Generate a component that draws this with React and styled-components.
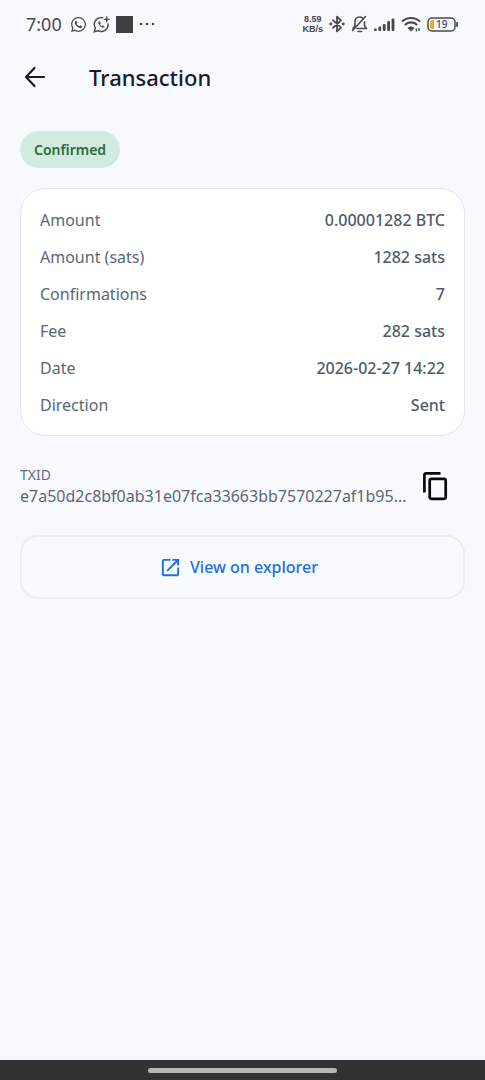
import React from 'react'
import styled, { createGlobalStyle } from 'styled-components'
import { MdOpenInNew } from 'react-icons/md'
import { FaWhatsapp } from 'react-icons/fa'


const GlobalStyle = createGlobalStyle`
  * {
    box-sizing: border-box;
  }
  body {
    margin: 0;
    background: #f8f9ff;
    font-family: 'Noto Sans', sans-serif;
    color: #4f5b6b;
  }
  button {
    font-family: inherit;
    cursor: pointer;
  }
`

const Screen = styled.div`
  min-height: 100vh;
  display: flex;
  flex-direction: column;
`

const StatusBar = styled.div`
  height: 48px;
  padding: 0 26px;
  display: flex;
  align-items: center;
  justify-content: space-between;
  color: #48494c;
`

const StatusGroup = styled.div`
  display: flex;
  align-items: center;
  gap: ${({ $gap }) => $gap}px;

  svg {
    display: block;
    flex: none;
  }
`

const Clock = styled.span`
  font-size: 18px;
  font-weight: 400;
  line-height: 24px;
  margin-right: 2px;
`

const Square = styled.span`
  width: 17px;
  height: 17px;
  background: #3f3f40;
`

const Speed = styled.div`
  display: flex;
  flex-direction: column;
  align-items: center;
  font-family: 'Liberation Sans', sans-serif;
  font-size: 9px;
  font-weight: 700;
  line-height: 10px;
`

const Header = styled.header`
  height: 58px;
  padding: 0 20px;
  display: flex;
  align-items: center;
  gap: 39px;
`

const IconButton = styled.button`
  width: ${({ $width }) => $width}px;
  height: 48px;
  padding: 0;
  border: 0;
  background: none;
  display: flex;
  align-items: center;
  justify-content: center;
  flex: none;
  color: ${({ $color }) => $color};
`

const Title = styled.h1`
  margin: 0;
  font-size: 22px;
  font-weight: 500;
  line-height: 30px;
  color: #171b2b;
`

const Content = styled.main`
  flex: 1;
  padding: 25px 20px;
  display: flex;
  flex-direction: column;
  align-items: stretch;
`

const Chip = styled.span`
  align-self: flex-start;
  padding: 0 14px;
  border-radius: 19px;
  background: #d1ebe1;
  color: #2c6b36;
  font-size: 14px;
  font-weight: 600;
  line-height: 37px;
`

const Card = styled.dl`
  margin: 20px 0 0;
  padding: 13px 19px 11px;
  border: 1px solid #e3e6ee;
  border-radius: 25px;
  background: #fff;
`

const Row = styled.div`
  display: flex;
  justify-content: space-between;
  font-size: 16px;
  line-height: 37px;
`

const Label = styled.dt`
  font-weight: 400;
  color: #5b6678;
`

const Value = styled.dd`
  margin: 0;
  font-weight: 500;
`

const Txid = styled.div`
  margin-top: 26px;
  display: flex;
  align-items: center;
`

const TxidText = styled.div`
  flex: 1;
  min-width: 0;
`

const TxidLabel = styled.div`
  font-size: 14px;
  line-height: 20px;
  color: #666d79;
`

const Hash = styled.div`
  font-size: 16px;
  line-height: 22px;
  white-space: nowrap;
  color: #5b6678;
`

const ExplorerButton = styled.button`
  margin-top: 25px;
  height: 64px;
  padding: 0 24px 0 16px;
  border: 2px solid #ebedf3;
  border-radius: 18px;
  background: #f8fafd;
  display: flex;
  align-items: center;
  justify-content: center;
  gap: 8px;
  font-size: 16px;
  font-weight: 500;
  line-height: 24px;
  color: #1a6fe6;
`

const NavBar = styled.div`
  height: 20px;
  background: #303332;
  display: flex;
  align-items: center;
  justify-content: center;
`

const NavHandle = styled.span`
  width: 39%;
  height: 5px;
  border-radius: 3px;
  background: #b5b5b5;
`

const ArrowIcon = () => (
  <svg width="22" height="22" viewBox="0 0 22 22" fill="none" stroke="currentColor" strokeWidth="2.2" strokeLinecap="round" strokeLinejoin="round">
    <path d="M20 11H2M10.5 2L2 11l8.5 9" />
  </svg>
)

const CopyIcon = () => (
  <svg width="26" height="30" viewBox="0 0 26 30" fill="none" stroke="currentColor" strokeWidth="2.7">
    <path d="M2.4 21.5V4a1.7 1.7 0 0 1 1.7-1.7H18.5" />
    <rect x="7.7" y="7.8" width="16" height="20" rx="1.7" />
  </svg>
)

const StatusUpdateIcon = () => (
  <svg width="17" height="17" viewBox="0 0 17 17" fill="none" stroke="currentColor" strokeWidth="1.4" strokeLinecap="round">
    <path d="M9.5 1.8A6.7 6.7 0 0 0 2.4 12L1.3 15.7l3.8-1A6.7 6.7 0 0 0 15 8" />
    <path d="M13.7 1v4.8M11.3 3.4h4.8" />
    <path d="M6 5.5c-1 1.2-.3 2.8 1.1 4.2s3 2.1 4.2 1.1l-1.6-1.1-.9.7c-.9-.4-1.7-1.2-2.1-2.1l.7-.9z" fill="currentColor" strokeWidth=".6" />
  </svg>
)

const DotsIcon = () => (
  <svg width="16" height="4" viewBox="0 0 16 4" fill="currentColor">
    <circle cx="2" cy="2" r="1.3" />
    <circle cx="8" cy="2" r="1.3" />
    <circle cx="14" cy="2" r="1.3" />
  </svg>
)

const BluetoothIcon = () => (
  <svg width="16" height="18" viewBox="0 0 16 18" fill="none" stroke="currentColor" strokeWidth="1.8" strokeLinejoin="round" strokeLinecap="round">
    <path d="M4 5.2l8 7.4L8 16.3V1.7l4 3.7-8 7.4" />
    <circle cx="1.7" cy="9" r="1.4" fill="currentColor" stroke="none" />
    <circle cx="14.3" cy="9" r="1.4" fill="currentColor" stroke="none" />
  </svg>
)

const MutedIcon = () => (
  <svg width="17" height="18" viewBox="0 0 17 18" fill="none" stroke="currentColor" strokeWidth="1.6" strokeLinecap="round" strokeLinejoin="round">
    <path d="M11.5 3C10.7 2.3 9.7 2 8.5 2 5.7 2 4 4.1 4 6.6V10.5L2 13.5M6 13.5h9.5l-2-2.7V7M1.5 15.5L14.5 1.5" />
    <path d="M7 16.5h3.5" />
  </svg>
)

const SignalIcon = () => (
  <svg width="21" height="15" viewBox="0 0 21 15" fill="currentColor">
    <rect x="0" y="11.4" width="2.8" height="2.6" rx="1" />
    <rect x="4.4" y="9.5" width="2.8" height="4.5" rx="1" />
    <rect x="8.8" y="7" width="2.8" height="7" rx="1" />
    <rect x="13.2" y="4" width="2.8" height="10" rx="1" />
    <rect x="17.6" y="1.5" width="2.8" height="12.5" rx="1" />
  </svg>
)

const WifiIcon = () => (
  <svg width="20" height="16" viewBox="0 0 20 16" fill="none" stroke="currentColor" strokeWidth="2.2">
    <path d="M1 5.5C6 .8 14 .8 19 5.5M3.8 9c3.5-3.4 8.9-3.4 12.4 0" />
    <path d="M6.5 12c2-2 5-2 7 0L10 15.5z" fill="currentColor" stroke="none" />
    <path d="M15.4 15.5v-3M18 12v3" strokeWidth="1.4" />
  </svg>
)

const BatteryIcon = () => (
  <svg width="32" height="15" viewBox="0 0 32 15">
    <rect x="1" y="1" width="27" height="13" rx="4" fill="none" stroke="currentColor" strokeWidth="1.5" />
    <path d="M5.5 3H7v9H5.5A2.5 2.5 0 0 1 3 9.5v-4A2.5 2.5 0 0 1 5.5 3z" fill="#f4a52f" />
    <text x="9" y="11" fontSize="10" fontWeight="500" fill="currentColor">19</text>
    <path d="M30 6v3" stroke="currentColor" strokeWidth="1.8" strokeLinecap="round" />
  </svg>
)

const details = [
  { label: 'Amount', value: '0.00001282 BTC' },
  { label: 'Amount (sats)', value: '1282 sats' },
  { label: 'Confirmations', value: '7' },
  { label: 'Fee', value: '282 sats' },
  { label: 'Date', value: '2026-02-27 14:22' },
  { label: 'Direction', value: 'Sent' },
]

const txid = 'e7a50d2c8bf0ab31e07fca33663bb7570227af1b95'

const App = () => {
  const handleCopy = () => {
    navigator.clipboard.writeText(txid)
  }

  return (
    <Screen>
      <GlobalStyle />
      <StatusBar>
        <StatusGroup $gap={6}>
          <Clock>7:00</Clock>
          <FaWhatsapp size={17} />
          <StatusUpdateIcon />
          <Square />
          <DotsIcon />
        </StatusGroup>
        <StatusGroup $gap={6}>
          <Speed>
            <span>8.59</span>
            <span>KB/s</span>
          </Speed>
          <BluetoothIcon />
          <MutedIcon />
          <SignalIcon />
          <WifiIcon />
          <BatteryIcon />
        </StatusGroup>
      </StatusBar>

      <Header>
        <IconButton $width={30} $color="#171b2b" aria-label="Back">
          <ArrowIcon />
        </IconButton>
        <Title>Transaction</Title>
      </Header>

      <Content>
        <Chip>Confirmed</Chip>
        <Card>
          {details.map(({ label, value }) => (
            <Row key={label}>
              <Label>{label}</Label>
              <Value>{value}</Value>
            </Row>
          ))}
        </Card>
        <Txid>
          <TxidText>
            <TxidLabel>TXID</TxidLabel>
            <Hash>{txid}…</Hash>
          </TxidText>
          <IconButton $width={60} $color="#08090c" onClick={handleCopy} aria-label="Copy TXID">
            <CopyIcon />
          </IconButton>
        </Txid>
        <ExplorerButton>
          <MdOpenInNew size={23} />
          View on explorer
        </ExplorerButton>
      </Content>

      <NavBar>
        <NavHandle />
      </NavBar>
    </Screen>
  )
}

export default App
